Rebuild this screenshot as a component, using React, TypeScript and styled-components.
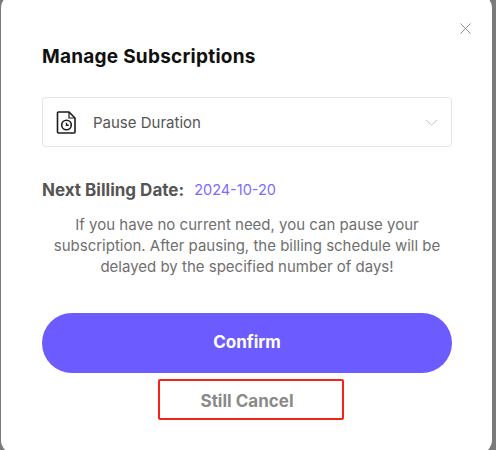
import React from 'react';
import styled, { createGlobalStyle } from 'styled-components';

const GlobalStyle = createGlobalStyle`
  html, body {
    margin: 0;
    padding: 0;
    background: #7a7a7a;
  }

  body {
    font-family: Inter, "Open Sans", "Liberation Sans", sans-serif;
  }
`;

const Backdrop = styled.div`
  width: 496px;
  height: 450px;
  overflow: hidden;
  background: #7a7a7a;
`;

const Modal = styled.div`
  box-sizing: border-box;
  width: 491px;
  height: 460px;
  margin: -6px 0 0 1px;
  padding: 52px 40px 0 41px;
  background: #fff;
  border-radius: 14px;
  position: relative;
  display: flex;
  flex-direction: column;
`;

const CloseButton = styled.button`
  position: absolute;
  top: 29px;
  right: 21px;
  width: 11px;
  height: 11px;
  padding: 0;
  border: 0;
  background: none;
  color: #8f8f8f;
  display: flex;
`;

const Title = styled.h2`
  margin: 0;
  font-size: 19px;
  line-height: 22px;
  font-weight: 700;
  letter-spacing: 0.25px;
  color: #111;
`;

const Select = styled.div`
  box-sizing: border-box;
  height: 50px;
  margin-top: 29px;
  padding: 0 13px 0 13px;
  border: 1px solid #e4e4ec;
  border-radius: 4px;
  display: flex;
  align-items: center;
`;

const SelectLabel = styled.span`
  flex: 1;
  margin-left: 17px;
  font-size: 15px;
  color: #555;
`;

const BillingRow = styled.div`
  margin-top: 33px;
  display: flex;
  align-items: center;
  gap: 10px;
  line-height: 20px;
`;

const BillingLabel = styled.span`
  font-size: 17px;
  font-weight: 700;
  color: #555;
`;

const BillingDate = styled.span`
  font-size: 14.500px;
  color: #7b6bff;
`;

const Description = styled.p`
  margin: 14px 0 0;
  font-size: 15px;
  line-height: 21px;
  text-align: center;
  color: #6f6f6f;
`;

const ConfirmButton = styled.button`
  height: 60px;
  margin-top: 36px;
  padding: 0 0 2px;
  border: 0;
  border-radius: 30px;
  background: #6c5cff;
  color: #fff;
  font-family: inherit;
  font-size: 17px;
  font-weight: 700;
`;

const CancelButton = styled.button`
  box-sizing: border-box;
  align-self: center;
  width: 186px;
  height: 41px;
  margin: 6px 0 0 7px;
  padding: 2px 7px 0 0;
  border: 2.5px solid #fb2016;
  border-radius: 2px;
  background: none;
  color: #8a8a8a;
  font-family: inherit;
  font-size: 17px;
  font-weight: 700;
`;

function PauseFileIcon () {
  return (
    <svg width='20' height='23' viewBox='0 0 20 23' fill='none' stroke='#1c1c1c' strokeWidth='1.6'>
      <path d='M2.500 1h10.500l6 6v14a1 1 0 0 1-1 1H2.500a1 1 0 0 1-1-1V2a1 1 0 0 1 1-1z' />
      <path d='M13 1v6h6' strokeWidth='1.2' />
      <circle cx='10.500' cy='14' r='4.800' />
      <path d='M10.500 11.800v2.400h2.200' strokeWidth='1.400' />
    </svg>
  );
}

export default function App () {
  return (
    <Backdrop>
      <GlobalStyle />
      <Modal>
        <CloseButton aria-label='Close'>
          <svg width='11' height='11' viewBox='0 0 11 11' stroke='currentColor' strokeWidth='1'>
            <path d='M.5.5l10 10M10.500.5l-10 10' />
          </svg>
        </CloseButton>
        <Title>Manage Subscriptions</Title>
        <Select>
          <PauseFileIcon />
          <SelectLabel>Pause Duration</SelectLabel>
          <svg width='13' height='7' viewBox='0 0 13 7' fill='none' stroke='#c4c4c8' strokeWidth='1'>
            <path d='M1 1l5.500 5 5.500-5' />
          </svg>
        </Select>
        <BillingRow>
          <BillingLabel>Next Billing Date:</BillingLabel>
          <BillingDate>2024-10-20</BillingDate>
        </BillingRow>
        <Description>
          If you have no current need, you can pause your subscription. After pausing, the billing schedule will be delayed by the specified number of days!
        </Description>
        <ConfirmButton>Confirm</ConfirmButton>
        <CancelButton>Still Cancel</CancelButton>
      </Modal>
    </Backdrop>
  );
}
